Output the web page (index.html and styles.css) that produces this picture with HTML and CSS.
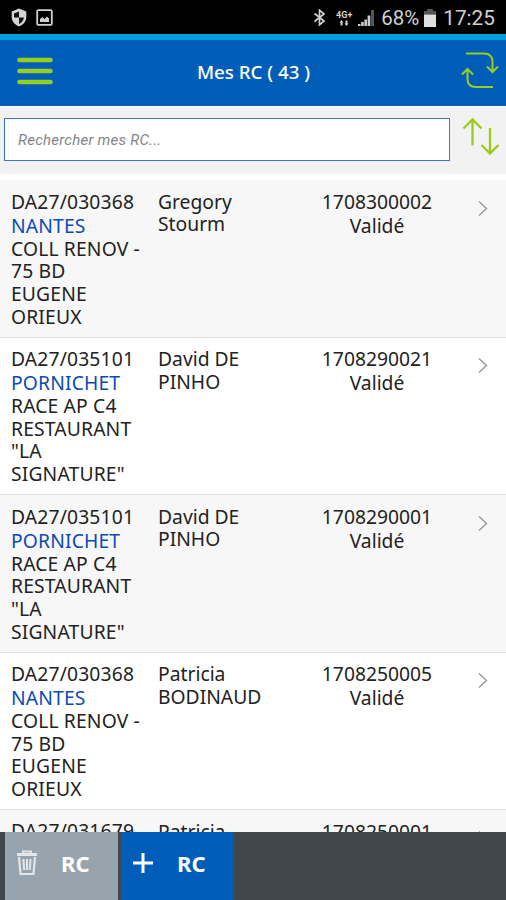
FILE: index.html
```html
<!DOCTYPE html>
<html lang="fr">
<head>
  <meta charset="UTF-8" />
  <meta name="viewport" content="width=device-width, initial-scale=1" />
  <title>Mes RC</title>
  <link rel="stylesheet" href="styles.css">
</head>
<body>

<!-- Status bar -->
<div class="status-bar">
  <div class="status-left">
    <svg width="16" height="19" viewBox="0 0 16 19">
      <path d="M8 .5L15.3 3.5V9C15.3 13.500 12 17 8 18.500C4 17 .7 13.500 .7 9V3.500Z" fill="#d4d4d4"/>
      <path d="M8 3.500V9.500H3C3 8 3 6.500 3 5.500ZM8 9.500H13C12.500 12.500 10.500 14.800 8 16Z" fill="#111"/>
    </svg>
    <svg width="17" height="17" viewBox="0 0 17 17">
      <rect x="1.200" y="1.200" width="14.600" height="14.600" rx="1" fill="none" stroke="#d0d0d0" stroke-width="1.800"/>
      <path d="M4 13V10L6.500 8L8.500 10L11 7.500L13 9.500V13Z" fill="#d0d0d0"/>
    </svg>
  </div>
  <div class="status-right">
    <svg class="bluetooth" width="13" height="17" viewBox="0 0 13 17">
      <path d="M1.500 4.500L11 12L6.500 15.800V1.200L11 5L1.500 12.500" fill="none" stroke="#d0d0d0" stroke-width="1.700"/>
    </svg>
    <div class="network">
      <span>4G+</span>
      <svg width="10" height="6" viewBox="0 0 10 6">
        <path d="M2.500 0L4.500 2.500H3.500V5.500H1.500V2.500H.5ZM7.500 6L9.500 3.500H8.500V.5H6.500V3.500H5.500Z" fill="#d0d0d0"/>
      </svg>
    </div>
    <svg class="signal" width="18" height="18" viewBox="0 0 18 18">
      <path d="M1 15H3.500V17H1ZM4.200 13H6.700V17H4.200ZM7.400 10.500H9.900V17H7.400ZM10.600 6.500H13.300V17H10.600Z" fill="#d0d0d0"/>
      <path d="M14 1H17V17H14Z" fill="#555"/>
    </svg>
    <span class="percent">68%</span>
    <svg class="battery" width="12" height="18" viewBox="0 0 12 18">
      <path d="M3 0H9V2H12V5.500H0V2H3Z" fill="#555"/>
      <path d="M0 5.500H12V18H0Z" fill="#e0e0e0"/>
    </svg>
    <span class="clock">17:25</span>
  </div>
</div>

<!-- Header -->
<header class="header">
  <button class="icon-btn menu-btn">
    <svg width="36" height="28" viewBox="0 0 36 28">
      <path d="M2.500 3H33.500M2.500 14H33.500M2.500 25H33.500" stroke="#98ce20" stroke-width="4.600" stroke-linecap="round"/>
    </svg>
  </button>
  <h1>Mes RC ( 43 )</h1>
  <button class="icon-btn refresh-btn">
    <svg width="38" height="38" viewBox="0 0 38 38" fill="none" stroke="#98ce20" stroke-width="2">
      <path d="M5 2.500H23Q31.500 2.500 31.500 11V20M26 15.500L31.500 21L37 15.500"/>
      <path d="M32 36H15Q6.500 36 6.500 27.500V19M1 23.500L6.500 18L12 23.500"/>
    </svg>
  </button>
</header>

<!-- Search -->
<div class="search-bar">
  <input type="text" class="search-input" placeholder="Rechercher mes RC..." />
  <button class="icon-btn">
    <svg width="38" height="38" viewBox="0 0 38 38" fill="none" stroke="#9acb1c" stroke-width="2.300">
      <path d="M10.500 28.500V3M1.500 11.500L10.500 2.500L19.500 11.500"/>
      <path d="M28 11V36M19.500 28L28 36.500L36.500 28"/>
    </svg>
  </button>
</div>

<!-- RC list -->
<main class="rc-list">
  <div class="rc-row">
    <div class="col-address">
      <p class="ref">DA27/030368</p>
      <p class="city">NANTES</p>
      <p>COLL RENOV -<br>75 BD<br>EUGENE<br>ORIEUX</p>
    </div>
    <div class="col-name">Gregory<br>Stourm</div>
    <div class="col-number">1708300002<br><span class="state">Validé</span></div>
    <svg class="chevron" width="10" height="17" viewBox="0 0 10 17"><path d="M1 1.500L8.500 8.500L1 15.500"/></svg>
  </div>
  <div class="rc-row">
    <div class="col-address">
      <p class="ref">DA27/035101</p>
      <p class="city">PORNICHET</p>
      <p>RACE AP C4<br>RESTAURANT<br>"LA<br>SIGNATURE"</p>
    </div>
    <div class="col-name">David DE<br>PINHO</div>
    <div class="col-number">1708290021<br><span class="state">Validé</span></div>
    <svg class="chevron" width="10" height="17" viewBox="0 0 10 17"><path d="M1 1.500L8.500 8.500L1 15.500"/></svg>
  </div>
  <div class="rc-row">
    <div class="col-address">
      <p class="ref">DA27/035101</p>
      <p class="city">PORNICHET</p>
      <p>RACE AP C4<br>RESTAURANT<br>"LA<br>SIGNATURE"</p>
    </div>
    <div class="col-name">David DE<br>PINHO</div>
    <div class="col-number">1708290001<br><span class="state">Validé</span></div>
    <svg class="chevron" width="10" height="17" viewBox="0 0 10 17"><path d="M1 1.500L8.500 8.500L1 15.500"/></svg>
  </div>
  <div class="rc-row">
    <div class="col-address">
      <p class="ref">DA27/030368</p>
      <p class="city">NANTES</p>
      <p>COLL RENOV -<br>75 BD<br>EUGENE<br>ORIEUX</p>
    </div>
    <div class="col-name">Patricia<br>BODINAUD</div>
    <div class="col-number">1708250005<br><span class="state">Validé</span></div>
    <svg class="chevron" width="10" height="17" viewBox="0 0 10 17"><path d="M1 1.500L8.500 8.500L1 15.500"/></svg>
  </div>
  <div class="rc-row">
    <div class="col-address">
      <p class="ref">DA27/031679</p>
    </div>
    <div class="col-name">Patricia</div>
    <div class="col-number">1708250001</div>
    <svg class="chevron" width="10" height="17" viewBox="0 0 10 17"><path d="M1 1.500L8.500 8.500L1 15.500"/></svg>
  </div>
</main>

<!-- Bottom bar -->
<footer class="footer">
  <button class="footer-btn delete-btn">
    <svg width="22" height="26" viewBox="0 0 22 26" fill="none" stroke="#e2e6e9">
      <path d="M1 4.500H21" stroke-width="3"/>
      <path d="M7 4V1.500H15V4" stroke-width="1.800"/>
      <path d="M3 7L4.500 24H17.500L19 7" stroke-width="2.200"/>
      <path d="M7.500 9L8.200 20M11 9V20M14.500 9L13.800 20" stroke-width="2"/>
    </svg>
    <span>RC</span>
  </button>
  <button class="footer-btn add-btn">
    <svg width="22" height="26" viewBox="0 0 22 26"><path d="M1 13H21M11 3V23" stroke="#fff" stroke-width="3"/></svg>
    <span>RC</span>
  </button>
</footer>

</body>
</html>
```
FILE: styles.css
```css
* {
  box-sizing: border-box;
}

body {
  font-family: "Noto Sans", "Open Sans", sans-serif;
  margin: 0;
  height: 900px;
  display: flex;
  flex-direction: column;
  overflow: hidden;
  background-color: #fff;
  color: #222;
}

button {
  font-family: inherit;
  border: none;
  cursor: pointer;
}

svg {
  display: block;
  flex-shrink: 0;
}

.status-bar {
  height: 34px;
  flex-shrink: 0;
  background-color: #000;
  color: #d0d0d0;
  display: flex;
  justify-content: space-between;
  align-items: center;
  padding: 1px 11px 0;
  font-family: Roboto, sans-serif;
}

.status-left,
.status-right {
  display: flex;
  align-items: center;
}

.status-left {
  gap: 9px;
}

.network {
  width: 20px;
  margin-left: 8px;
  display: flex;
  flex-direction: column;
  align-items: center;
  font-size: 9px;
  font-weight: bold;
  line-height: 10px;
}

.signal {
  margin-left: 3px;
}

.percent {
  width: 39px;
  margin-left: 6px;
  font-size: 20.5px;
}

.battery {
  margin-left: 4px;
}

.clock {
  margin-left: 7px;
  font-size: 20.8px;
}

.header {
  height: 72px;
  flex-shrink: 0;
  background-color: #005eb8;
  border-top: 6px solid #009fe0;
  border-bottom: 1px solid #1d5cae;
  display: flex;
  justify-content: space-between;
  align-items: center;
  padding: 0 7px 0 17px;
}

.header h1 {
  margin: -3px 7px 0 0;
  color: #fff;
  font-size: 18.7px;
  font-weight: 500;
}

.icon-btn {
  padding: 0;
  background: none;
}

.refresh-btn {
  margin-top: -5px;
}

.menu-btn {
  margin-top: -3px;
}

.search-bar {
  height: 68px;
  flex-shrink: 0;
  background-color: #f2f2f3;
  display: flex;
  align-items: flex-start;
  justify-content: space-between;
  padding: 12px 6px 0 4px;
}

.search-input {
  width: 446px;
  height: 43px;
  padding: 0 13px;
  border: 1px solid #3a78c4;
  background-color: #fff;
  font-family: Roboto, sans-serif;
  font-size: 15px;
  font-style: italic;
  letter-spacing: 0.25px;
}

.search-input::placeholder {
  color: #858585;
}

.search-bar .icon-btn {
  margin-top: -1px;
}

.rc-list {
  flex: 1;
  min-height: 0;
  overflow: hidden;
  border-top: 6px solid #fff;
  font-size: 19.3px;
  line-height: 22.5px;
}

.rc-row {
  height: 157.5px;
  display: flex;
  align-items: flex-start;
  padding: 9.5px 18px 0 11px;
  border-bottom: 1px solid #e0e0e0;
}

.rc-row:nth-child(odd) {
  background-color: #f7f7f7;
}

.rc-row p {
  margin: 0;
}

.col-address {
  width: 147px;
  white-space: nowrap;
  letter-spacing: 0.15px;
}

.col-address .ref,
.col-address .city {
  line-height: 24px;
}

.col-address .city {
  color: #0a4bb5;
}

.col-address p:last-child {
  line-height: 22.7px;
}

.col-name {
  width: 146px;
  padding-top: 1px;
}

.col-number {
  width: 146px;
  line-height: 24px;
  text-align: center;
}

.chevron {
  margin: 10px 0 0 auto;
  fill: none;
  stroke: #999;
  stroke-width: 1.400;
}

.footer {
  height: 68px;
  flex-shrink: 0;
  background-color: #40474d;
  display: flex;
  gap: 3px;
  padding-left: 5px;
}

.footer-btn {
  width: 113px;
  padding: 0 0 6px 11px;
  display: flex;
  align-items: center;
  gap: 23px;
  color: #fff;
  font-size: 22px;
  font-weight: bold;
}

.delete-btn {
  background-color: #98a4ad;
}

.add-btn {
  background-color: #005eb8;
}
```
